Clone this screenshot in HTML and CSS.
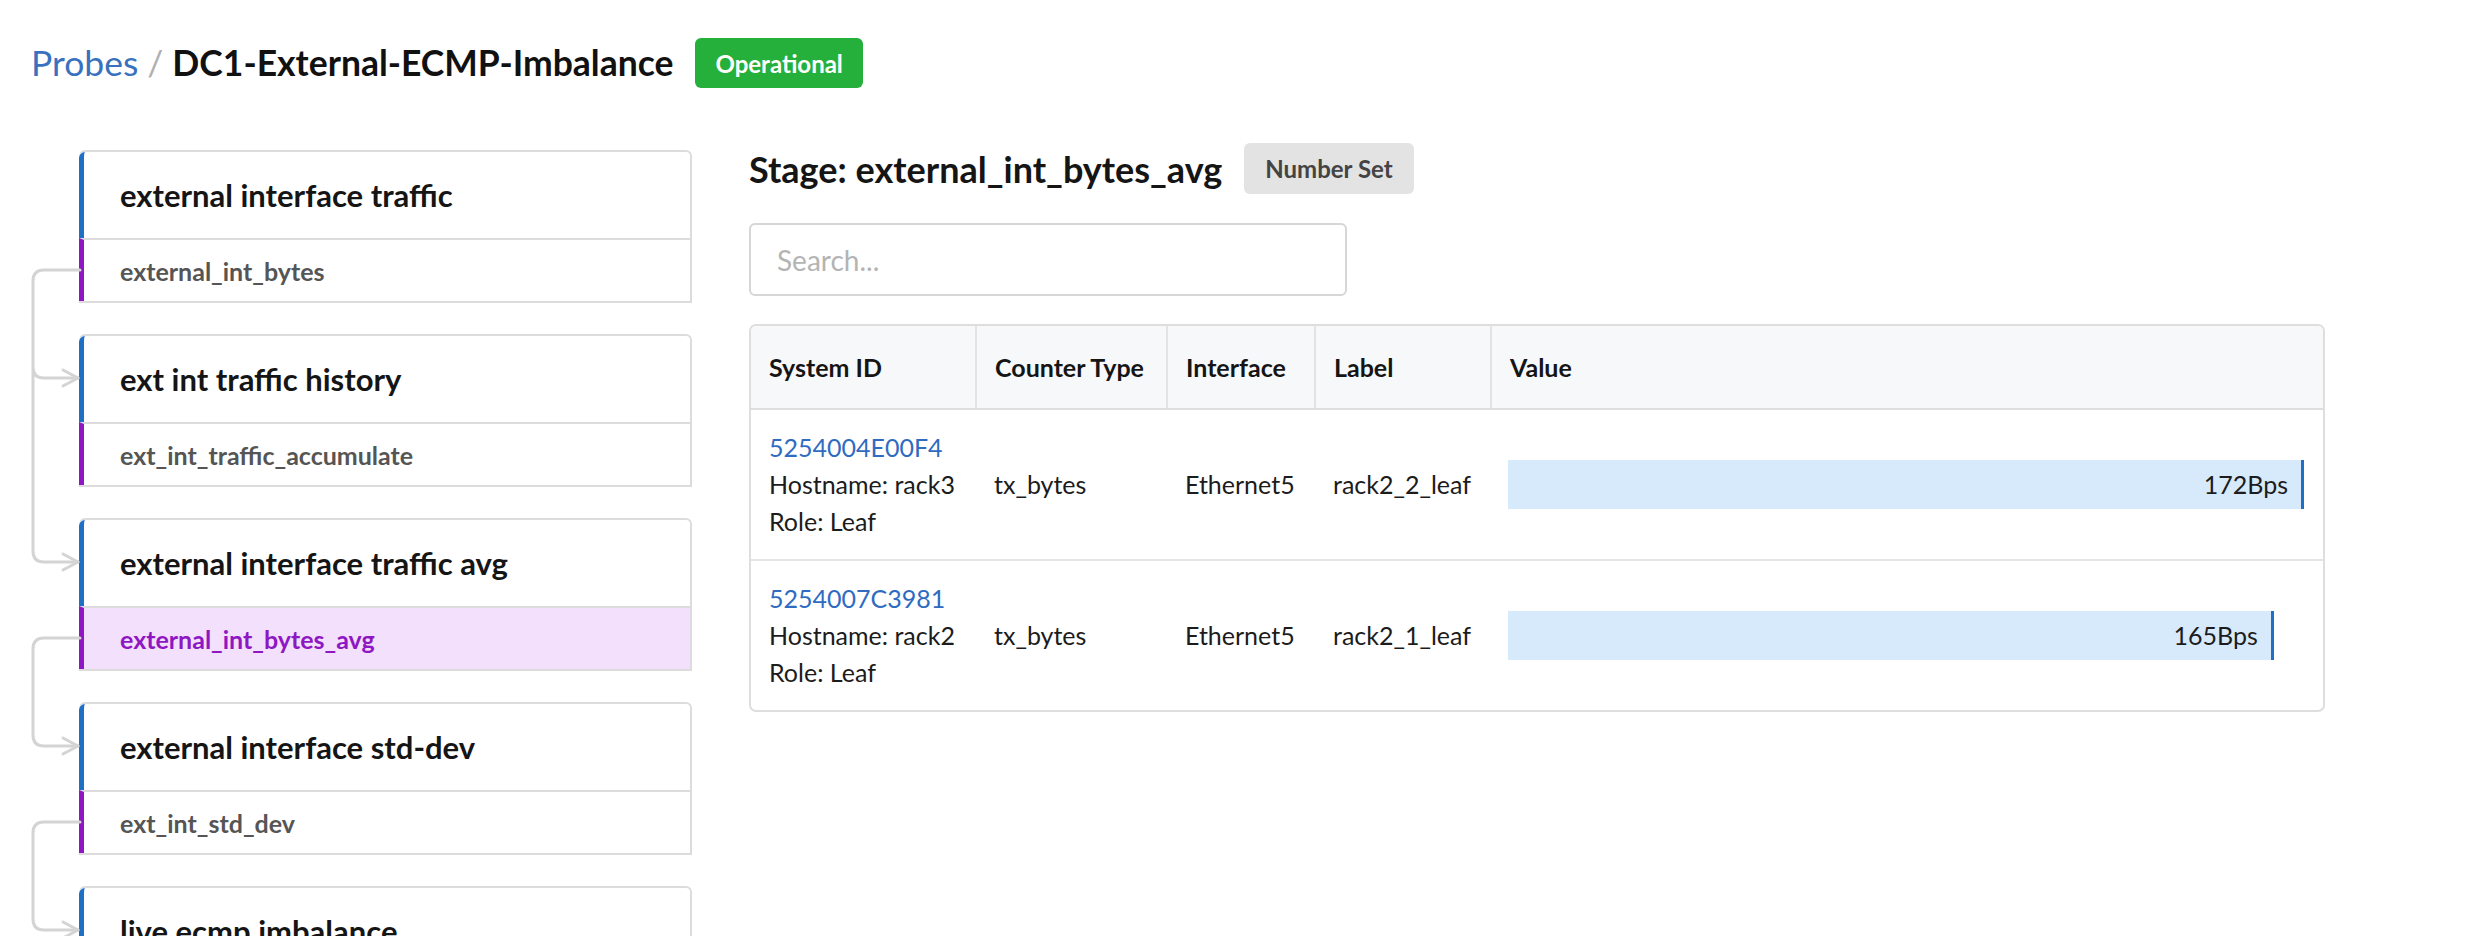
FILE: index.html
```html
<!DOCTYPE html>
<html>
<head>
<meta charset="utf-8">
<title>Probe</title>
<link rel="stylesheet" href="styles.css">
</head>
<body>
<div class="page">
  <header class="top">
    <h1 class="crumbs"><a class="crumb-link">Probes</a><span class="sep">/</span><span class="crumb-cur">DC1-External-ECMP-Imbalance</span></h1>
    <span class="badge-ok">Operational</span>
  </header>
  <main class="main">
    <svg class="flow" width="100" height="800" viewBox="0 0 100 800">
      <g fill="none" stroke="#d4d4d4" stroke-width="3" stroke-linejoin="round" stroke-linecap="round">
        <path d="M80 127 H44 Q33 127 33 138 V224 Q33 235 44 235 H78 M33 224 V408 Q33 419 44 419 H78"/>
        <path d="M80 495 H44 Q33 495 33 506 V592 Q33 603 44 603 H78"/>
        <path d="M80 679 H44 Q33 679 33 690 V776 Q33 787 44 787 H78"/>
        <path d="M63 227 L78 235 L63 243"/>
        <path d="M63 411 L78 419 L63 427"/>
        <path d="M63 595 L78 603 L63 611"/>
        <path d="M63 779 L78 787 L63 795"/>
      </g>
    </svg>
    <section class="stages">
      <div class="card">
        <div class="card-head">external interface traffic</div>
        <div class="card-sub">external_int_bytes</div>
      </div>
      <div class="card">
        <div class="card-head">ext int traffic history</div>
        <div class="card-sub">ext_int_traffic_accumulate</div>
      </div>
      <div class="card">
        <div class="card-head">external interface traffic avg</div>
        <div class="card-sub selected">external_int_bytes_avg</div>
      </div>
      <div class="card">
        <div class="card-head">external interface std-dev</div>
        <div class="card-sub">ext_int_std_dev</div>
      </div>
      <div class="card">
        <div class="card-head">live ecmp imbalance</div>
        <div class="card-sub">live_ecmp_imbalance</div>
      </div>
    </section>
    <section class="detail">
      <div class="stage-row">
        <h2 class="stage-title">Stage: external_int_bytes_avg</h2>
        <span class="badge-type">Number Set</span>
      </div>
      <div class="search"><span class="placeholder">Search...</span></div>
      <div class="table-wrap">
        <table class="grid">
          <colgroup>
            <col class="c1"><col class="c2"><col class="c3"><col class="c4"><col class="c5">
          </colgroup>
          <thead>
            <tr><th>System ID</th><th>Counter Type</th><th>Interface</th><th>Label</th><th>Value</th></tr>
          </thead>
          <tbody>
            <tr>
              <td><a class="sys-link">5254004E00F4</a><div>Hostname: rack3</div><div>Role: Leaf</div></td>
              <td>tx_bytes</td>
              <td>Ethernet5</td>
              <td>rack2_2_leaf</td>
              <td><div class="bar" style="width:100%">172Bps</div></td>
            </tr>
            <tr>
              <td><a class="sys-link">5254007C3981</a><div>Hostname: rack2</div><div>Role: Leaf</div></td>
              <td>tx_bytes</td>
              <td>Ethernet5</td>
              <td>rack2_1_leaf</td>
              <td><div class="bar" style="width:96.2%">165Bps</div></td>
            </tr>
          </tbody>
        </table>
      </div>
    </section>
  </main>
</div>
</body>
</html>
```

FILE: styles.css
```css
html, body {
  margin: 0;
  padding: 0;
  overflow: hidden;
  background: #ffffff;
}
body {
  font-family: Lato, "Open Sans", sans-serif;
  color: #222;
}
.page {
  padding: 38px 0 0 31px;
}
.top {
  display: flex;
  align-items: center;
  height: 50px;
}
.crumbs {
  margin: 0;
  font-size: 35.5px;
  font-weight: 700;
  line-height: 50px;
  color: #111;
}
.crumb-link {
  color: #3a71bf;
  font-weight: 400;
}
.sep {
  color: #b0b0b0;
  font-weight: 400;
  margin: 0 9px;
}
.badge-ok {
  margin-left: 22px;
  height: 50px;
  padding: 0 20px;
  display: flex;
  align-items: center;
  background: #24b03a;
  color: #fff;
  font-size: 24px;
  font-weight: 700;
  border-radius: 6px;
}
.main {
  position: relative;
  display: flex;
  margin: 55px 0 0 -31px;
}
.flow {
  position: absolute;
  left: 0;
  top: 0;
}
.stages {
  margin-left: 79px;
  padding-top: 7px;
  width: 613px;
  flex: none;
  display: flex;
  flex-direction: column;
  gap: 31px;
}
.card {
  border: 2px solid #dcdcdc;
  border-left: 0;
  border-radius: 6px 6px 0 0;
}
.card-head {
  height: 86px;
  display: flex;
  align-items: center;
  padding-left: 36px;
  border-left: 5px solid #1f6fc5;
  border-top-left-radius: 6px;
  font-size: 31px;
  font-weight: 700;
  color: #151515;
}
.card-sub {
  height: 61px;
  display: flex;
  align-items: center;
  padding-left: 36px;
  border-top: 2px solid #dcdcdc;
  border-left: 5px solid #8e17c3;
  font-size: 25px;
  font-weight: 700;
  color: #555;
}
.card-sub.selected {
  background: #f3e0fc;
  color: #8e17c3;
}
.detail {
  margin-left: 57px;
  width: 1576px;
  flex: none;
}
.stage-row {
  display: flex;
  align-items: center;
  height: 51px;
}
.stage-title {
  margin: 0;
  font-size: 36px;
  font-weight: 700;
  color: #151515;
}
.badge-type {
  margin-left: 22px;
  height: 51px;
  padding: 0 21px;
  display: flex;
  align-items: center;
  background: #e3e3e3;
  color: #444;
  font-size: 24px;
  font-weight: 700;
  border-radius: 6px;
}
.search {
  margin-top: 29px;
  width: 598px;
  height: 73px;
  box-sizing: border-box;
  border: 2px solid #d6d6d6;
  border-radius: 6px;
  display: flex;
  align-items: center;
  padding-left: 26px;
}
.placeholder {
  font-size: 28px;
  color: #b4b4b4;
}
.table-wrap {
  margin-top: 28px;
  border: 2px solid #dedede;
  border-radius: 7px;
  overflow: hidden;
}
.grid {
  width: 100%;
  border-collapse: collapse;
  table-layout: fixed;
  font-size: 25px;
}
.c1 { width: 225px; }
.c2 { width: 191px; }
.c3 { width: 148px; }
.c4 { width: 176px; }
.grid th {
  height: 82px;
  background: #f7f8fa;
  text-align: left;
  font-weight: 700;
  color: #151515;
  padding: 0 18px;
  border-bottom: 2px solid #dedede;
  border-left: 2px solid #e3e3e3;
  font-size: 25px;
}
.grid th:first-child {
  border-left: 0;
}
.grid td {
  height: 149px;
  padding: 0 18px;
  line-height: 37px;
  color: #1c1c1c;
  vertical-align: middle;
}
.grid td:last-child {
  padding: 0 19px 0 17px;
}
.grid tbody tr + tr td {
  border-top: 2px solid #e5e5e5;
}
.sys-link {
  color: #2f6bc1;
  display: block;
}
.bar {
  box-sizing: border-box;
  height: 49px;
  background: #d6eafc;
  border-right: 3px solid #1f6fc5;
  display: flex;
  align-items: center;
  justify-content: flex-end;
  padding-right: 13px;
  color: #1c1c1c;
}
```
